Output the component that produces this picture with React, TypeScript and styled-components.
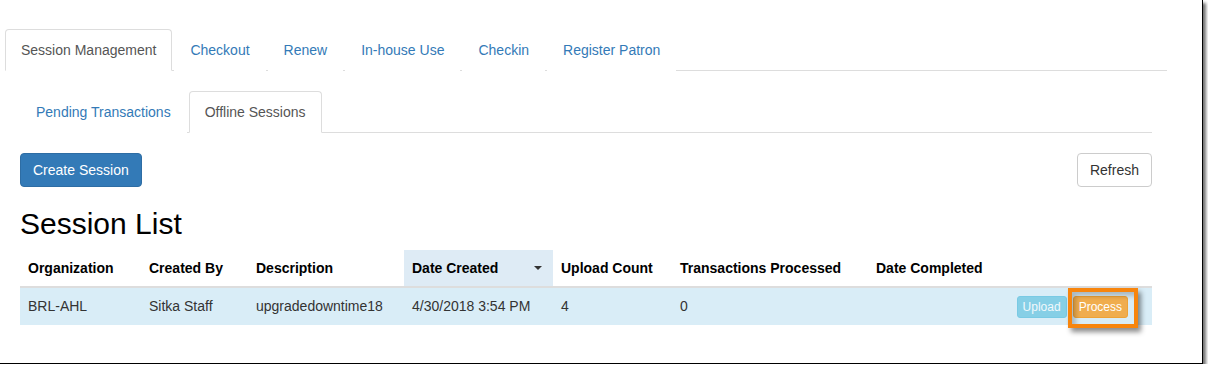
import React from "react";
import styled, {createGlobalStyle} from "styled-components";

const GlobalStyle = createGlobalStyle`
  html, body {
    margin: 0;
    padding: 0;
    background: #fff;
  }
  body {
    font-family: "Liberation Sans", Arial, sans-serif;
    font-size: 14px;
    line-height: 1.42857;
    color: #333;
  }
`;

const Frame = styled.div`
  width: 1202px;
  height: 363px;
  border-right: 1px solid #000;
  border-bottom: 1px solid #000;
  box-shadow: 3px 3px 3px rgba(0, 0, 0, 0.55);
  background: #fff;
  box-sizing: content-box;
  overflow: hidden;
`;

const Page = styled.div`
  width: 1162px;
  padding: 29px 0 0 5px;
`;

const Tabs = styled.ul`
  display: flex;
  list-style: none;
  margin: 0;
  padding: 0;
  border-bottom: 1px solid #ddd;
`;

const Tab = styled.li<{ $active?: boolean }>`
  margin-right: 2px;
  margin-bottom: -1px;
  padding: 10px 15px;
  border: 1px solid ${(p) => (p.$active ? "#ddd" : "transparent")};
  border-bottom-color: ${(p) => (p.$active ? "#fff" : "transparent")};
  border-radius: 4px 4px 0 0;
  background: #fff;
  color: ${(p) => (p.$active ? "#555" : "#337ab7")};
  line-height: 20px;
  cursor: pointer;
`;

const Panel = styled.div`
  padding: 20px 15px 0;
`;

const Toolbar = styled.div`
  display: flex;
  justify-content: space-between;
  margin-top: 20px;
`;

const Button = styled.button<{ $kind: "primary" | "default" }>`
  font-family: inherit;
  font-size: 14px;
  line-height: 20px;
  padding: 6px 12px;
  border-radius: 4px;
  border: 1px solid ${(p) => (p.$kind === "primary" ? "#2e6da4" : "#ccc")};
  background: ${(p) => (p.$kind === "primary" ? "#337ab7" : "#fff")};
  color: ${(p) => (p.$kind === "primary" ? "#fff" : "#333")};
  cursor: pointer;
`;

const Heading = styled.h2`
  font-size: 30px;
  font-weight: 500;
  line-height: 33px;
  margin: 20px 0 10px;
  color: #000;
`;

const Table = styled.table`
  width: 1132px;
  border-collapse: collapse;
  table-layout: fixed;
`;

const Th = styled.th<{ $sorted?: boolean }>`
  text-align: left;
  font-weight: bold;
  color: #000;
  padding: 8px;
  line-height: 20px;
  border-bottom: 2px solid #ddd;
  background: ${(p) => (p.$sorted ? "#deebf5" : "transparent")};
  white-space: nowrap;
`;

const SortHead = styled.div`
  display: flex;
  align-items: center;
  justify-content: space-between;
  padding-right: 3px;
`;

const Caret = styled.span`
  width: 0;
  height: 0;
  border-left: 4px solid transparent;
  border-right: 4px solid transparent;
  border-top: 4px solid #333;
`;

const Row = styled.tr`
  background: #d9edf7;
`;

const Td = styled.td`
  padding: 8px 8px 9px;
  line-height: 20px;
  color: #333;
  white-space: nowrap;
`;

const ActionCell = styled(Td)`
  padding: 8px 24px 7px 8px;
`;

const Actions = styled.div`
  display: flex;
  justify-content: flex-end;
  gap: 6px;
`;

const SmallButton = styled.button<{ $kind: "info" | "warning"; $disabled?: boolean }>`
  position: relative;
  font-family: inherit;
  font-size: 12px;
  line-height: 18px;
  padding: 1px 5px;
  border-radius: 3px;
  border: 1px solid ${(p) => (p.$kind === "info" ? "#46b8da" : "#eea236")};
  background: ${(p) => (p.$kind === "info" ? "#5bc0de" : "#f0ad4e")};
  color: #fff;
  opacity: ${(p) => (p.$disabled ? 0.65 : 1)};
`;

// orange annotation box drawn over the Process button
const Highlight = styled.span`
  position: absolute;
  left: -6px;
  right: -11px;
  top: -9px;
  bottom: -11px;
  border: 4px solid #f7850d;
  box-shadow: 3px 4px 5px rgba(0, 0, 0, 0.45), inset 4px 4px 5px rgba(0, 0, 0, 0.22);
  pointer-events: none;
`;

const columns = [121, 107, 156, 149, 119, 196, 140, 144];

export default function App() {
  return (
    <>
      <GlobalStyle/>
      <Frame>
        <Page>
          <Tabs>
            <Tab $active>Session Management</Tab>
            <Tab>Checkout</Tab>
            <Tab>Renew</Tab>
            <Tab>In-house Use</Tab>
            <Tab>Checkin</Tab>
            <Tab>Register Patron</Tab>
          </Tabs>
          <Panel>
            <Tabs>
              <Tab>Pending Transactions</Tab>
              <Tab $active>Offline Sessions</Tab>
            </Tabs>
            <Toolbar>
              <Button $kind="primary">Create Session</Button>
              <Button $kind="default">Refresh</Button>
            </Toolbar>
            <Heading>Session List</Heading>
            <Table>
              <colgroup>
                {columns.map((w, i) => (
                  <col key={i} style={{width: w}}/>
                ))}
              </colgroup>
              <thead>
                <tr>
                  <Th>Organization</Th>
                  <Th>Created By</Th>
                  <Th>Description</Th>
                  <Th $sorted>
                    <SortHead>
                      Date Created
                      <Caret/>
                    </SortHead>
                  </Th>
                  <Th>Upload Count</Th>
                  <Th>Transactions Processed</Th>
                  <Th>Date Completed</Th>
                  <Th/>
                </tr>
              </thead>
              <tbody>
                <Row>
                  <Td>BRL-AHL</Td>
                  <Td>Sitka Staff</Td>
                  <Td>upgradedowntime18</Td>
                  <Td>4/30/2018 3:54 PM</Td>
                  <Td>4</Td>
                  <Td>0</Td>
                  <Td/>
                  <ActionCell>
                    <Actions>
                      <SmallButton $kind="info" $disabled>Upload</SmallButton>
                      <SmallButton $kind="warning">
                        Process
                        <Highlight/>
                      </SmallButton>
                    </Actions>
                  </ActionCell>
                </Row>
              </tbody>
            </Table>
          </Panel>
        </Page>
      </Frame>
    </>
  );
}
